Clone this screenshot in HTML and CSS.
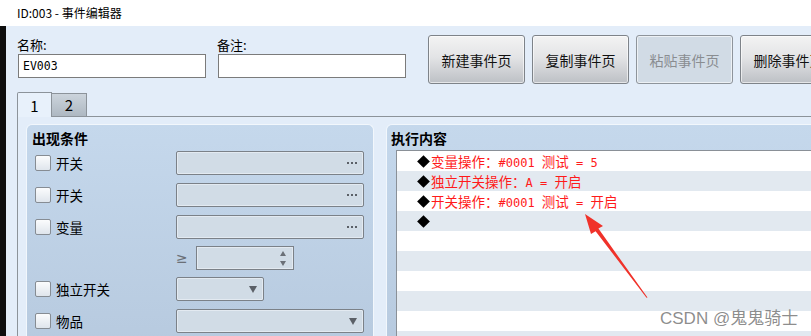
FILE: index.html
```html
<!DOCTYPE html>
<html lang="zh-CN">
<head>
    <meta charset="UTF-8">
    <meta name="viewport" content="width=device-width, initial-scale=1.0">
    <title>ID:003 - 事件编辑器</title>
    <link rel="stylesheet" href="styles.css">
</head>
<body>
    <div class="titlebar">ID:003 - 事件编辑器</div>

    <div class="shell">
        <div class="edge"></div>
        <div class="window">
            <div class="header">
                <div class="field name-field">
                    <label>名称:</label>
                    <input class="text-input mono" value="EV003">
                </div>
                <div class="field note-field">
                    <label>备注:</label>
                    <input class="text-input" value="">
                </div>
                <div class="buttons">
                    <button class="btn">新建事件页</button>
                    <button class="btn">复制事件页</button>
                    <button class="btn" disabled>粘贴事件页</button>
                    <button class="btn">删除事件页</button>
                </div>
            </div>

            <div class="tabs">
                <div class="tab active">1</div>
                <div class="tab">2</div>
            </div>

            <div class="pane">
                <div class="group conditions">
                    <div class="group-title">出现条件</div>
                    <div class="cond-rows">
                        <div class="row">
                            <div class="cond"><span class="check"></span>开关</div>
                            <div class="box wide"><span class="dots"></span></div>
                        </div>
                        <div class="row">
                            <div class="cond"><span class="check"></span>开关</div>
                            <div class="box wide"><span class="dots"></span></div>
                        </div>
                        <div class="row">
                            <div class="cond"><span class="check"></span>变量</div>
                            <div class="box wide"><span class="dots"></span></div>
                        </div>
                        <div class="row spin-row">
                            <div class="cond"></div>
                            <span class="gte">≥</span>
                            <div class="box spinner">
                                <span class="spin-arrows"><span class="up"></span><span class="down"></span></span>
                            </div>
                        </div>
                        <div class="row tight">
                            <div class="cond"><span class="check"></span>独立开关</div>
                            <div class="box short"><span class="caret"></span></div>
                        </div>
                        <div class="row">
                            <div class="cond"><span class="check"></span>物品</div>
                            <div class="box wide"><span class="caret"></span></div>
                        </div>
                    </div>
                </div>

                <div class="group commands">
                    <div class="group-title">执行内容</div>
                    <div class="cmd-list">
                        <div class="cmd-row"><span class="diamond"></span><span class="cmd">变量操作：<span class="mono">#0001 </span>测试<span class="mono"> = 5</span></span></div>
                        <div class="cmd-row"><span class="diamond"></span><span class="cmd">独立开关操作：<span class="mono">A = </span>开启</span></div>
                        <div class="cmd-row"><span class="diamond"></span><span class="cmd">开关操作：<span class="mono">#0001 </span>测试<span class="mono"> = </span>开启</span></div>
                        <div class="cmd-row"><span class="diamond"></span></div>
                        <div class="cmd-row"></div>
                        <div class="cmd-row"></div>
                        <div class="cmd-row"></div>
                        <div class="cmd-row"></div>
                        <div class="cmd-row"></div>
                        <div class="cmd-row"></div>
                    </div>
                </div>
            </div>
        </div>
    </div>

    <!-- annotation arrow drawn over the screenshot -->
    <svg class="annotation" width="811" height="336" viewBox="0 0 811 336">
        <polygon points="585,214 603,226 598.4,228.6 647.5,297.5 646.5,297.8 595.6,231.2 591,234" fill="#f0322a"/>
    </svg>

    <div class="watermark">CSDN @鬼鬼骑士</div>
</body>
</html>
```

FILE: styles.css
```css
* {
    box-sizing: border-box;
}
body {
    margin: 0;
    width: 811px;
    height: 336px;
    overflow: hidden;
    position: relative;
    font-family: "Noto Sans CJK SC", sans-serif;
    font-size: 13px;
    color: #000;
    background: #e3edf9;
}
.mono {
    font-family: "DejaVu Sans Mono", monospace;
    font-size: 11.5px;
}
.titlebar {
    height: 26px;
    line-height: 25px;
    padding-left: 17px;
    background: #fff;
    font-size: 12px;
}
.shell {
    display: flex;
    height: 310px;
}
.edge {
    width: 6px;
    flex-shrink: 0;
    background: #0e0e0e;
}
.window {
    flex: 1;
    min-width: 0;
    overflow: hidden;
    padding-top: 9px;
}

/* header: name / note fields and page buttons */
.header {
    display: flex;
    align-items: flex-start;
    padding-left: 12px;
}
.field {
    width: 188px;
    flex-shrink: 0;
}
.name-field {
    margin-right: 12px;
}
.note-field {
    margin-right: 22px;
}
.field label {
    display: block;
    height: 19px;
    line-height: 19px;
    margin-left: -1px;
    font-size: 13px;
}
.text-input {
    display: block;
    width: 188px;
    height: 24px;
    margin: 0;
    padding: 0 4px;
    border: 1px solid #7b7b7b;
    background: #fff;
    outline: none;
}
.buttons {
    display: flex;
    flex-shrink: 0;
}
.btn {
    width: 97px;
    height: 49px;
    flex-shrink: 0;
    margin-right: 7px;
    padding: 0;
    border: 1px solid #7e8389;
    border-radius: 3px;
    background: linear-gradient(#f3f3f3, #e3e4e6 45%, #bdc0c5);
    box-shadow: inset 0 0 0 1px rgba(255, 255, 255, 0.6);
    font-family: "Noto Sans CJK SC", sans-serif;
    font-size: 14px;
    color: #111;
    white-space: nowrap;
}
.btn:disabled {
    background: #d1dbe5;
    border-color: #8e949b;
    color: #8a8d91;
}

/* tabs */
.tabs {
    display: flex;
    align-items: flex-end;
    height: 24px;
    margin: 8px 0 0 11px;
}
.tab {
    width: 35px;
    height: 23px;
    line-height: 22px;
    text-align: center;
    font-size: 15px;
    border: 1px solid #8c939a;
    border-bottom: none;
    background: linear-gradient(#ccd4dc, #aeb8c2);
}
.tab + .tab {
    border-left: none;
}
.tab.active {
    position: relative;
    z-index: 1;
    height: 25px;
    margin-bottom: -1px;
    line-height: 25px;
    background: #e8f1fb;
    border-radius: 2px 0 0 0;
}

/* tab pane with the two group boxes */
.pane {
    display: flex;
    gap: 12px;
    height: 230px;
    margin-left: 11px;
    padding: 7px 0 0 8px;
    border-top: 1px solid #8c939a;
    border-left: 1px solid #8c939a;
}
.group {
    flex-shrink: 0;
    padding: 3px 0 0 5px;
    border: 1px solid #f2f7fc;
    border-bottom: none;
    border-radius: 6px 6px 0 0;
    background: linear-gradient(#c5d8ec, #b7cadf);
}
.group-title {
    height: 20px;
    line-height: 20px;
    font-size: 14px;
    font-weight: bold;
}
.conditions {
    width: 348px;
}
.conditions .group-title {
    margin-bottom: 3px;
}
.commands {
    width: 520px;
    padding-left: 4px;
}
.commands .group-title {
    margin-bottom: 2px;
}

/* condition rows */
.cond-rows {
    display: flex;
    flex-direction: column;
    gap: 8px;
    padding-left: 3px;
}
.row {
    display: flex;
    align-items: center;
    height: 24px;
}
.row.spin-row,
.row.tight {
    margin-top: -1px;
}
.cond {
    display: flex;
    align-items: center;
    width: 141px;
    flex-shrink: 0;
    font-size: 13.5px;
}
.check {
    width: 16px;
    height: 16px;
    margin-right: 5px;
    border: 1px solid #868c93;
    border-radius: 2px;
    background: linear-gradient(#fbfcfd, #dfe5ec);
}
.box {
    display: flex;
    align-items: center;
    justify-content: flex-end;
    height: 24px;
    border: 1px solid #7b8188;
    border-radius: 2px;
    background: #d1dce6;
    box-shadow: inset 0 0 0 1px #e3eaf1;
}
.box.wide {
    width: 188px;
}
.box.short {
    width: 88px;
}
.box.spinner {
    width: 98px;
    border-radius: 0;
}
.dots {
    width: 2px;
    height: 2px;
    margin-right: 14px;
    background: #5b6067;
    box-shadow: 4px 0 #5b6067, 8px 0 #5b6067;
}
.caret {
    width: 0;
    height: 0;
    margin-right: 6px;
    border-left: 4px solid transparent;
    border-right: 4px solid transparent;
    border-top: 7px solid #5b6067;
}
.gte {
    width: 20px;
    font-family: "DejaVu Sans", sans-serif;
    font-size: 14px;
    color: #6b7077;
}
.spin-arrows {
    display: flex;
    flex-direction: column;
    gap: 5px;
    margin-right: 7px;
}
.spin-arrows .up {
    border-left: 3px solid transparent;
    border-right: 3px solid transparent;
    border-bottom: 5px solid #6b7077;
}
.spin-arrows .down {
    border-left: 3px solid transparent;
    border-right: 3px solid transparent;
    border-top: 5px solid #6b7077;
}

/* command list */
.cmd-list {
    margin-left: 5px;
    border-top: 1px solid #8a9097;
    border-left: 1px solid #8a9097;
    background: #fff;
}
.cmd-row {
    display: flex;
    align-items: center;
    height: 20px;
    padding-left: 22px;
}
.cmd-row:nth-child(even) {
    background: #e2e9f0;
}
.diamond {
    width: 9px;
    height: 9px;
    margin-right: 3px;
    background: #000;
    transform: rotate(45deg);
}
.cmd {
    color: #ff1a1a;
    font-size: 13.5px;
    white-space: pre;
}
.cmd .mono {
    font-size: 12px;
}

/* overlays */
.annotation {
    position: absolute;
    left: 0;
    top: 0;
    pointer-events: none;
}
.watermark {
    position: absolute;
    left: 660px;
    top: 304px;
    font-family: "Liberation Sans", "Noto Sans CJK SC", sans-serif;
    font-size: 17px;
    color: rgba(120, 120, 120, 0.85);
}
```
